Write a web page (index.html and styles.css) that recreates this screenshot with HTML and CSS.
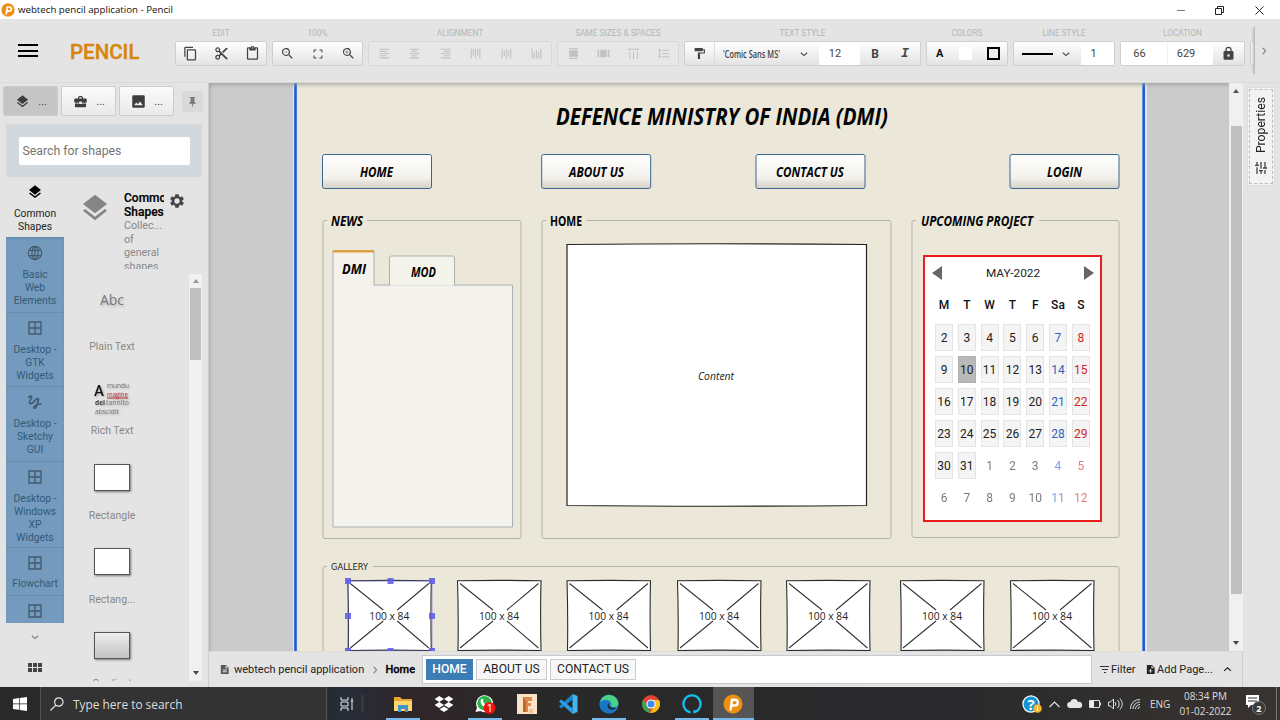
FILE: index.html
```html
<!DOCTYPE html>
<html lang="en">
<head>
<meta charset="utf-8">
<title>webtech pencil application - Pencil</title>
<link rel="stylesheet" href="styles.css">
</head>
<body>
<svg class="defs" aria-hidden="true">
  <defs>
    <symbol id="pencil" viewBox="0 0 16 16"><circle cx="8" cy="8" r="7.6" fill="#ef8f12"/><path d="M6 12.5 7.2 4.6h2.3a2.3 2.3 0 0 1 0 4.6H7.6" fill="none" stroke="#fff" stroke-width="1.9" stroke-linecap="round" stroke-linejoin="round"/></symbol>
    <symbol id="layers" viewBox="0 0 24 24"><path d="M12 18.5 4.6 12.8 3 14.1l9 7 9-7-1.6-1.3zM12 16l7.4-5.7L21 9l-9-7-9 7 1.6 1.3z"/></symbol>
    <symbol id="copy" viewBox="0 0 24 24"><path d="M16 1H4a2 2 0 0 0-2 2v14h2V3h12zm3 4H8a2 2 0 0 0-2 2v14c0 1.1.9 2 2 2h11a2 2 0 0 0 2-2V7a2 2 0 0 0-2-2zm0 16H8V7h11z"/></symbol>
    <symbol id="cut" viewBox="0 0 24 24"><path d="M9.6 7.6A4 4 0 1 0 7.6 9.600L10 12l-2.400 2.400a4 4 0 1 0 2 2L12 14l7 7h3v-1zM6 8a2 2 0 1 1 0-4 2 2 0 0 1 0 4zm0 12a2 2 0 1 1 0-4 2 2 0 0 1 0 4zM19 3l-6 6 2 2 7-7V3z"/></symbol>
    <symbol id="paste" viewBox="0 0 24 24"><path d="M19 2h-4.200a3 3 0 0 0-5.600 0H5a2 2 0 0 0-2 2v16c0 1.100.9 2 2 2h14a2 2 0 0 0 2-2V4a2 2 0 0 0-2-2zm-7 0a1 1 0 1 1 0 2 1 1 0 0 1 0-2zm7 18H5V4h2v3h10V4h2z"/></symbol>
    <symbol id="zoomout" viewBox="0 0 24 24"><path d="M9.500 3a6.500 6.500 0 1 0 4.200 11.500l.3.300v.7l5 5 1.500-1.500-5-5h-.7l-.3-.3A6.500 6.500 0 0 0 9.500 3zm0 2a4.500 4.500 0 1 1 0 9 4.500 4.500 0 0 1 0-9zM7 9h5v1H7z"/></symbol>
    <symbol id="zoomin" viewBox="0 0 24 24"><path d="M9.500 3a6.500 6.500 0 1 0 4.200 11.500l.3.300v.7l5 5 1.500-1.500-5-5h-.7l-.3-.3A6.500 6.500 0 0 0 9.500 3zm0 2a4.500 4.500 0 1 1 0 9 4.500 4.500 0 0 1 0-9zM7 9h2V7h1v2h2v1h-2v2H9v-2H7z"/></symbol>
    <symbol id="fit" viewBox="0 0 24 24"><path d="M3 5v4h2V5h4V3H5a2 2 0 0 0-2 2zm2 10H3v4c0 1.100.9 2 2 2h4v-2H5zm14 4h-4v2h4a2 2 0 0 0 2-2v-4h-2zm0-16h-4v2h4v4h2V5a2 2 0 0 0-2-2z"/></symbol>
    <symbol id="al" viewBox="0 0 24 24"><path d="M3 3h18v2H3zm0 4h12v2H3zm0 4h18v2H3zm0 4h12v2H3zm0 4h18v2H3z"/></symbol>
    <symbol id="ac" viewBox="0 0 24 24"><path d="M3 3h18v2H3zm4 4h10v2H7zm-4 4h18v2H3zm4 4h10v2H7zm-4 4h18v2H3z"/></symbol>
    <symbol id="ar" viewBox="0 0 24 24"><path d="M3 3h18v2H3zm6 4h12v2H9zm-6 4h18v2H3zm6 4h12v2H9zm-6 4h18v2H3z"/></symbol>
    <symbol id="at" viewBox="0 0 24 24"><path d="M3 3h2v18H3zm4 0h2v12H7zm4 0h2v18h-2zm4 0h2v12h-2zm4 0h2v18h-2z"/></symbol>
    <symbol id="am" viewBox="0 0 24 24"><path d="M3 3h2v18H3zm4 4h2v10H7zm4-4h2v18h-2zm4 4h2v10h-2zm4-4h2v18h-2z"/></symbol>
    <symbol id="ab" viewBox="0 0 24 24"><path d="M3 3h2v18H3zm4 6h2v12H7zm4-3h2v15h-2zm4 3h2v12h-2zm4-6h2v18h-2z"/></symbol>
    <symbol id="sw" viewBox="0 0 24 24"><path d="M4 2h16v2H4zm0 4h16v12H4zm0 14h16v2H4z"/></symbol>
    <symbol id="sh" viewBox="0 0 24 24"><path d="M1 5h3v14H1zm5 0h12v14H6zm14 0h3v14h-3z"/></symbol>
    <symbol id="sp" viewBox="0 0 24 24"><path d="M2 4l3-3v2h14V1l3 3-3 3V5H5v2zM4 9h2v13H4zm7 0h2v13h-2zm7 0h2v13h-2z"/></symbol>
    <symbol id="ls" viewBox="0 0 24 24"><path d="M6 7h2.500L5 3.500 1.500 7H4v10H1.500L5 20.500 8.500 17H6zm4-2v2h12V5zm0 14h12v-2H10zm0-6h12v-2H10z"/></symbol>
    <symbol id="roller" viewBox="0 0 24 24"><path d="M18 4V2H3v6h15V6h2v4H9v12h4V12h9V4z"/></symbol>
    <symbol id="down" viewBox="0 0 16 16"><path d="M3 6l5 4.500L13 6" fill="none" stroke="currentColor" stroke-width="1.700"/></symbol>
    <symbol id="lock" viewBox="0 0 24 24"><path d="M18 8h-1V6A5 5 0 0 0 7 6v2H6a2 2 0 0 0-2 2v10c0 1.100.9 2 2 2h12a2 2 0 0 0 2-2V10a2 2 0 0 0-2-2zm-6 9a2 2 0 1 1 0-4 2 2 0 0 1 0 4zM9 8V6a3 3 0 0 1 6 0v2z"/></symbol>
    <symbol id="case" viewBox="0 0 24 24"><path d="M10 16v-1H3v4c0 1.100.9 2 2 2h14a2 2 0 0 0 2-2v-4h-7v1zm10-9h-4V5l-2-2h-4L8 5v2H4a2 2 0 0 0-2 2v3c0 1.100.9 2 2 2h6v-2h4v2h6a2 2 0 0 0 2-2V9a2 2 0 0 0-2-2zm-6 0h-4V5h4z"/></symbol>
    <symbol id="image" viewBox="0 0 24 24"><path d="M22 20V4a2 2 0 0 0-2-2H4a2 2 0 0 0-2 2v16c0 1.100.9 2 2 2h16a2 2 0 0 0 2-2zM8.500 13.500l2.500 3 3.500-4.500 4.500 6H5z"/></symbol>
    <symbol id="pin" viewBox="0 0 24 24"><path d="M6 2h12v2h-2v8l3 3v2h-6v6h-2v-6H5v-2l3-3V4H6z"/></symbol>
    <symbol id="globe" viewBox="0 0 24 24"><g fill="none" stroke="currentColor" stroke-width="1.700"><circle cx="12" cy="12" r="10"/><ellipse cx="12" cy="12" rx="4.500" ry="10"/><path d="M3 8h18M3 16h18M12 2v20"/></g></symbol>
    <symbol id="grid" viewBox="0 0 24 24"><path d="M3 3h18v18H3zM12 3v18M3 12h18" fill="none" stroke="currentColor" stroke-width="2"/></symbol>
    <symbol id="gesture" viewBox="0 0 24 24"><path d="M2 6c2-3 5-4 5-1S2 11 4 13.500s6-1 8-4 6-3.500 5 0-2.500 12-5.500 12-1-6 10.500-6.500" fill="none" stroke="currentColor" stroke-width="2.500"/></symbol>
    <symbol id="gear" viewBox="0 0 24 24"><path fill-rule="evenodd" d="M9.500 2h5l.5 3 2 1.200 2.800-1.200 2.500 4.200L20 11v2l2.300 1.800-2.500 4.200-2.800-1.200-2 1.200-.5 3h-5L9 19l-2-1.200L4.200 19l-2.500-4.200L4 13v-2L1.700 9.200 4.200 5 7 6.200 9 5zM12 8a4 4 0 1 0 0 8 4 4 0 0 0 0-8z"/></symbol>
    <symbol id="tune" viewBox="0 0 24 24"><path d="M3 17v2h6v-2zM3 5v2h10V5zm10 16v-2h8v-2h-8v-2h-2v6zM7 9v2H3v2h4v2h2V9zm14 4v-2H11v2zM15 9h2V7h4V5h-4V3h-2z"/></symbol>
    <symbol id="doc" viewBox="0 0 24 24"><path fill-rule="evenodd" d="M6 2h9l6 6v14H4V2zm8 1.500V9h5.500zM8 12v2h9v-2zm0 4v2h9v-2z"/></symbol>
    <symbol id="docadd" viewBox="0 0 24 24"><path fill-rule="evenodd" d="M4 2h11l6 6v14H4zm10 1.500V9h5.500zM11 11v3H8v2h3v3h2v-3h3v-2h-3v-3z"/></symbol>
  </defs>
</svg>

<div class="window">
  <header class="titlebar">
    <svg class="app-icon"><use href="#pencil"/></svg>
    <span class="title">webtech pencil application - Pencil</span>
    <svg class="window-buttons" viewBox="0 0 90 18"><g fill="none" stroke="#222"><path d="M2 9.500h8" stroke="#777"/><path d="M40.500 7.500h6v6h-6zM42.500 7.500v-2h6v6h-2"/><path d="M80.500 5.500l8 8M88.500 5.500l-8 8"/></g></svg>
  </header>

  <div class="toolbar">
    <div class="burger"><i></i><i></i><i></i></div>
    <div class="brand">PENCIL</div>
    <div class="groups">
      <section class="group edit"><h6>EDIT</h6><div class="tools spread"><svg><use href="#copy"/></svg><svg><use href="#cut"/></svg><svg><use href="#paste"/></svg></div></section>
      <section class="group zoom"><h6>100%</h6><div class="tools spread"><svg><use href="#zoomout"/></svg><svg class="small"><use href="#fit"/></svg><svg><use href="#zoomin"/></svg></div></section>
      <section class="group align off"><h6>ALIGNMENT</h6><div class="tools spread"><svg><use href="#al"/></svg><svg><use href="#ac"/></svg><svg><use href="#ar"/></svg><svg><use href="#at"/></svg><svg><use href="#am"/></svg><svg><use href="#ab"/></svg></div></section>
      <section class="group sizes off"><h6>SAME SIZES &amp; SPACES</h6><div class="tools spread"><svg><use href="#sw"/></svg><svg><use href="#sh"/></svg><svg><use href="#sp"/></svg><svg><use href="#ls"/></svg></div></section>
      <section class="group text"><h6>TEXT STYLE</h6><div class="tools">
        <div class="cell roller"><svg><use href="#roller"/></svg></div>
        <div class="cell font"><svg class="font-name" viewBox="0 0 60 16"><text x="1" y="12" textLength="57" lengthAdjust="spacingAndGlyphs">'Comic Sans MS'</text></svg><svg class="chev"><use href="#down"/></svg></div>
        <div class="cell field size">12</div><div class="cell bold">B</div><div class="cell italic">I</div>
      </div></section>
      <section class="group colors"><h6>COLORS</h6><div class="tools"><b class="letter">A</b><i class="swatch fill"></i><i class="swatch line"></i></div></section>
      <section class="group stroke"><h6>LINE STYLE</h6><div class="tools"><div class="cell dash"><i></i><svg class="chev"><use href="#down"/></svg></div><div class="cell field">1</div></div></section>
      <section class="group location"><h6>LOCATION</h6><div class="tools"><div class="cell field">66</div><div class="cell field second">629</div><div class="cell lock"><svg><use href="#lock"/></svg></div></div></section>
      <section class="next-group"></section>
    </div>
    <div class="more"><svg class="chev turned"><use href="#down"/></svg></div>
  </div>

  <div class="main">
    <aside class="left">
      <nav class="tabs"><div class="tab on"><svg><use href="#layers"/></svg><span>...</span></div><div class="tab"><svg><use href="#case"/></svg><span>...</span></div><div class="tab"><svg><use href="#image"/></svg><span>...</span></div><div class="pin"><svg><use href="#pin"/></svg></div></nav>
      <div class="search"><div class="input">Search for shapes</div></div>
      <div class="shapes">
        <div class="collections">
          <div class="col current"><svg><use href="#layers"/></svg><span>Common<br>Shapes</span></div>
          <div class="col-list">
            <div class="col"><svg><use href="#globe"/></svg><span>Basic<br>Web<br>Elements</span></div>
            <div class="col"><svg><use href="#grid"/></svg><span>Desktop -<br>GTK<br>Widgets</span></div>
            <div class="col"><svg><use href="#gesture"/></svg><span>Desktop -<br>Sketchy<br>GUI</span></div>
            <div class="col"><svg><use href="#grid"/></svg><span>Desktop -<br>Windows<br>XP<br>Widgets</span></div>
            <div class="col"><svg><use href="#grid"/></svg><span>Flowchart</span></div>
            <div class="col"><svg><use href="#grid"/></svg></div>
          </div>
          <svg class="chev grey"><use href="#down"/></svg>
          <div class="dots"><i></i><i></i><i></i><i></i><i></i><i></i></div>
        </div>
        <div class="details">
          <div class="about"><svg class="big"><use href="#layers"/></svg><div class="desc"><b>Common<br>Shapes</b><br>Collec...<br>of<br>general<br>shapes</div><svg class="gear"><use href="#gear"/></svg></div>
          <div class="shape-pane">
            <div class="shape-list">
              <div class="shape"><div class="thumb abc">Abc</div><span>Plain Text</span></div>
              <div class="shape"><div class="thumb"><svg class="rich" viewBox="0 0 38 36"><text class="cap" x="1" y="15">A</text><text x="14" y="7" textLength="22" lengthAdjust="spacingAndGlyphs">mundu</text><text class="red" x="14" y="15.500" textLength="21" lengthAdjust="spacingAndGlyphs">magine</text><path d="M14 17h21" stroke="#b33"/><text class="strong" x="2" y="24" textLength="10" lengthAdjust="spacingAndGlyphs">del</text><text x="13" y="24" textLength="23" lengthAdjust="spacingAndGlyphs">tannito</text><text x="2" y="32.500" textLength="24" lengthAdjust="spacingAndGlyphs">abscidit</text></svg></div><span>Rich Text</span></div>
              <div class="shape"><div class="thumb"><i class="rect"></i></div><span>Rectangle</span></div>
              <div class="shape"><div class="thumb"><i class="rect"></i></div><span>Rectang...</span></div>
              <div class="shape"><div class="thumb"><i class="rect gradient"></i></div><span>Gradient</span></div>
            </div>
            <div class="scroll"><i class="up"></i><i class="bar"></i><i class="dn"></i></div>
          </div>
        </div>
      </div>
    </aside>

    <div class="center">
      <div class="stage">
        <div class="canvas">
          <svg class="drawing" viewBox="209 83 1020 568">
            <defs>
              <linearGradient id="btn" x2="0" y2="1"><stop offset="0" stop-color="#fff"/><stop offset=".7" stop-color="#f1f0ea"/><stop offset="1" stop-color="#d3cfc3"/></linearGradient>
              <g id="ph"><path d="M.5.8Q43 0 84 .8Q83.200 35 84 70.500Q42 69.700 1 70.500Q1.600 35 .5.800z" fill="#fff" stroke="#2b2b2b" stroke-width="1.100"/><path d="M3 3.500L36 30M81.500 3.500L50 30M3 68L36 41M81.500 68L50 41" fill="none" stroke="#333" stroke-width="1.050"/><text class="note" x="22" y="40" textLength="40" lengthAdjust="spacingAndGlyphs">100 x 84</text></g>
            </defs>
            <rect x="293" y="83" width="854" height="568" fill="#dfe6ef"/>
            <rect x="297" y="83" width="846" height="568" fill="#ebe8d9"/>
            <path d="M295.500 83v568M1143.700 83v568" stroke="#1c5bd0" stroke-width="2.600"/>
            <g class="hand">
              <text class="headline" x="556" y="125" textLength="332" lengthAdjust="spacingAndGlyphs">DEFENCE MINISTRY OF INDIA (DMI)</text>
            </g>
            <g fill="url(#btn)" stroke="#3b6690">
              <rect x="322.500" y="154.500" width="109" height="34" rx="2"/><rect x="541.700" y="154.500" width="109" height="34" rx="2"/><rect x="756" y="154.500" width="109" height="34" rx="2"/><rect x="1010" y="154.500" width="109" height="34" rx="2"/>
            </g>
            <g class="hand">
              <text x="360" y="177" textLength="33" lengthAdjust="spacingAndGlyphs">HOME</text>
              <text x="569" y="177" textLength="55" lengthAdjust="spacingAndGlyphs">ABOUT US</text>
              <text x="776" y="177" textLength="68" lengthAdjust="spacingAndGlyphs">CONTACT US</text>
              <text x="1047" y="177" textLength="35" lengthAdjust="spacingAndGlyphs">LOGIN</text>
              <text x="331" y="225.500" textLength="32" lengthAdjust="spacingAndGlyphs">NEWS</text>
              <text class="upright" x="550" y="225.500" textLength="32" lengthAdjust="spacingAndGlyphs">HOME</text>
              <text x="921" y="225.500" textLength="112" lengthAdjust="spacingAndGlyphs">UPCOMING PROJECT</text>
            </g>
            <g fill="none" stroke="#b5b3a5">
              <path d="M327 220.500h-2q-2 0-2 2v314q0 2 2 2h194q2 0 2-2V222.500q0-2-2-2H367"/>
              <path d="M546 220.500h-2q-2 0-2 2v314q0 2 2 2h345q2 0 2-2V222.500q0-2-2-2H586"/>
              <path d="M916 220.500h-2q-2 0-2 2v313q0 2 2 2h203q2 0 2-2V222.500q0-2-2-2H1039"/>
              <path d="M327 566.500h-2q-2 0-2 2V651M1119 651V568.500q0-2-2-2H373"/>
            </g>
            <path d="M333 250.500h41v34.500h138.500v242H333z" fill="#f3f2ec" stroke="#a9b0b1"/>
            <path d="M389.500 285.500V258q0-2 2-2h61q2 0 2 2v27.500" fill="#f3f3ea" stroke="#a9b0b1"/>
            <path d="M333 251.300h41" stroke="#e59c35" stroke-width="2.200"/>
            <g class="hand"><text x="342" y="273.500" textLength="24" lengthAdjust="spacingAndGlyphs">DMI</text><text x="411" y="276.500" textLength="25" lengthAdjust="spacingAndGlyphs">MOD</text></g>
            <path d="M567 244.500Q710 243 866.500 244.500V505.500Q710 507 567 505.500z" fill="#fff" stroke="#222" stroke-width="1.200"/>
            <text class="note slant" x="698" y="380" textLength="36" lengthAdjust="spacingAndGlyphs">Content</text>
            <text class="gallery" x="331" y="570" textLength="37" lengthAdjust="spacingAndGlyphs">GALLERY</text>
            <use href="#ph" x="347.300" y="580"/><use href="#ph" x="457" y="580"/><use href="#ph" x="566.500" y="580"/><use href="#ph" x="677" y="580"/><use href="#ph" x="786" y="580"/><use href="#ph" x="900" y="580"/><use href="#ph" x="1010" y="580"/>
            <path d="M348 581h84v70h-84z" fill="none" stroke="#6b66dc" stroke-opacity=".55"/>
            <path d="M345 578h6v6h-6zM387.500 578h6v6h-6zM429 578h6v6h-6zM345 613h6v6h-6zM429 613h6v6h-6zM345 648h6v6h-6zM387.500 648h6v6h-6zM429 648h6v6h-6z" fill="#6260e8" fill-opacity=".9"/>
          </svg>
          <div class="calendar">
            <div class="month"><i class="prev"></i><span>MAY-2022</span><i class="next"></i></div>
            <div class="days head"><b>M</b><b>T</b><b>W</b><b>T</b><b>F</b><b>Sa</b><b>S</b></div>
            <div class="days">
              <span>2</span><span>3</span><span>4</span><span>5</span><span>6</span><span>7</span><span>8</span>
              <span>9</span><span class="today">10</span><span>11</span><span>12</span><span>13</span><span>14</span><span>15</span>
              <span>16</span><span>17</span><span>18</span><span>19</span><span>20</span><span>21</span><span>22</span>
              <span>23</span><span>24</span><span>25</span><span>26</span><span>27</span><span>28</span><span>29</span>
              <span>30</span><span>31</span><span class="out">1</span><span class="out">2</span><span class="out">3</span><span class="out">4</span><span class="out">5</span>
              <span class="out">6</span><span class="out">7</span><span class="out">8</span><span class="out">9</span><span class="out">10</span><span class="out">11</span><span class="out">12</span>
            </div>
          </div>
        </div>
        <div class="scroll page-scroll"><i class="up"></i><i class="bar"></i><i class="dn"></i></div>
      </div>
      <div class="pages">
        <div class="crumbs"><svg><use href="#doc"/></svg><span class="file">webtech pencil application</span><svg class="chev turned grey"><use href="#down"/></svg><b>Home</b></div>
        <div class="page-tabs"><span class="on">HOME</span><span class="about-tab">ABOUT US</span><span class="contact-tab">CONTACT US</span></div>
        <div class="page-tools"><i class="filter"></i><span class="filter-label">Filter</span><svg><use href="#docadd"/></svg><span class="add">Add Page...</span><svg class="chev upward"><use href="#down"/></svg></div>
      </div>
    </div>

    <aside class="right"><div class="prop"><span>Properties</span><svg><use href="#tune"/></svg></div></aside>
  </div>

  <footer class="taskbar">
    <div class="start"><svg viewBox="0 0 14 14"><path d="M0 2l6-.9v5.500H0zM6.700 1 14 0v6.600H6.700zM0 7.300h6v5.500L0 12zM6.700 7.300H14V14l-7.300-1z" fill="#fff"/></svg></div>
    <div class="find"><svg viewBox="0 0 14 14"><g fill="none" stroke="#e8e8e8" stroke-width="1.200"><circle cx="8.800" cy="5" r="4.200"/><path d="M5.800 8.200.5 13.500"/></g></svg><span>Type here to search</span></div>
    <div class="view"><svg viewBox="0 0 14 14"><path d="M1 0v3h7V0M1 14v-3h7v3M1 5h7v4H1zM12 1v12M10.800 4h2.400" fill="none" stroke="#e5e5e5"/></svg><i></i></div>
    <div class="apps">
      <div class="app run"><svg viewBox="0 0 20 20"><path d="M1 3h6l2 2h10v12H1z" fill="#e8a62e"/><path d="M1 7h18v10H1z" fill="#ffd768"/><path d="M5 18v-7h10v7h-3v-3H8v3z" fill="#3f93cf"/></svg></div>
      <div class="app"><svg viewBox="0 0 20 20"><path d="M5.300 2 10 5 5.300 8 .6 5zM14.700 2l4.700 3-4.700 3L10 5zM5.300 8l4.700 3-4.700 3L.6 11zM14.700 8l4.700 3-4.700 3L10 11zM10 12.500l4.500 2.800L10 18l-4.500-2.700z" fill="#fff"/></svg></div>
      <div class="app run"><svg viewBox="0 0 20 20"><path d="M.5 18 2 13.500A8.500 8.500 0 1 1 5.300 17z" fill="#fff"/><circle cx="9.500" cy="9.200" r="7.200" fill="#29b34a"/><path d="M6 5.500c2-2 3 1 2 2 1 2 2 3 4 3 2-1 3 1 1 3-3 2-9-4-7-8z" fill="#fff"/><circle cx="14.500" cy="14" r="6" fill="#f50f13"/><text x="12" y="17.700" class="badge">1</text></svg></div>
      <div class="app"><svg viewBox="0 0 20 20"><path d="M0 0h20v20H0z" fill="#fae2c9"/><path d="M6 3h9v4h-4v2h3v3h-3v6H6z" fill="#dc8a47"/><path d="M6 3 9 8v10H6z" fill="#bb6930"/><path d="M12 15h4v4h-4z" fill="#f5bf89"/></svg></div>
      <div class="app"><svg viewBox="0 0 20 20"><path d="M14.500 0v5.500L3.200 14.500 1 12.500z" fill="#1688d0"/><path d="M14.500 20v-5.500L3.200 5.500 1 7.500z" fill="#2b9ee7"/><path d="M14.500 0 19.500 2v16l-5 2z" fill="#45b4f3"/></svg></div>
      <div class="app run"><svg viewBox="0 0 20 20"><circle cx="10" cy="10" r="9.500" fill="#1687cf"/><path d="M1 8A9.500 9.500 0 0 1 19.500 9c.3 4-5 5-7.500 3 2-5-4-9-11-4z" fill="#4ed183"/><path d="M.5 9c5-5 10-2 9 1-3 2-1 7 8 5.500A9.500 9.500 0 0 1 .5 9z" fill="#1976c5"/><path d="M10 8.500c-1 4 2 6 7 5l-1.500 2c-6 1-9-3-5.500-7z" fill="#262528"/></svg></div>
      <div class="app"><svg viewBox="0 0 20 20"><circle cx="10" cy="10" r="9" fill="#e54335"/><path d="M2.200 5.500 7 13l2 5.900A9 9 0 0 1 2.200 5.500z" fill="#33a852"/><path d="M10 6h8a9 9 0 0 1-9 12.900L13.500 12z" fill="#fbc116"/><circle cx="10" cy="10" r="4.600" fill="#fff"/><circle cx="10" cy="10" r="3.500" fill="#4285f4"/></svg></div>
      <div class="app run"><svg viewBox="0 0 20 20"><path d="M8.500 18.300a8.500 8.500 0 1 1 3 0q1.500-1 0-1.300" fill="none" stroke="#13bff0" stroke-width="2.300"/></svg></div>
      <div class="app run active"><svg><use href="#pencil"/></svg></div>
    </div>
    <div class="tray">
      <svg class="icons" viewBox="0 0 125 24"><circle cx="11" cy="12" r="8.700" fill="#fff"/><circle cx="11" cy="12" r="7.500" fill="#1394d5"/><text x="7.500" y="17.500" class="qm">?</text><circle cx="17.500" cy="16.500" r="4.300" fill="#f2b52f"/><path d="M17.500 14v5" stroke="#fff" stroke-width="1.200"/><path d="M29.500 15l5-5 5 5" fill="none" stroke="#ddd" stroke-width="1.200"/><path d="M50 16a3 3 0 0 1 .3-6A4 4 0 0 1 58 10a3 3 0 0 1 2 6z" fill="#e6e6e6"/><path d="M69.500 8.500h10v7h-10zM80.500 10.500v3" fill="none" stroke="#ddd"/><path d="M70 9h4v6h-4z" fill="#eee"/><g fill="none" stroke="#ddd"><path d="M88.500 10h2l3-3v10l-3-3h-2zM95 10q2 2 0 4M97.500 8q3.500 4 0 8M100 6.500q4.500 5.500 0 11"/><path d="M110.500 17A9 9 0 0 1 120 7.500M113 17a7 7 0 0 1 7-7M115.500 17a4.500 4.500 0 0 1 4.500-4.500M118 17q0-2 2-2"/></g></svg>
      <span class="lang">ENG</span>
      <div class="clock"><span>08:34 PM</span><span>01-02-2022</span></div>
      <svg class="notice" viewBox="0 0 24 24"><path d="M2 3h13v10H7l-3 3v-3H2z" fill="#fff"/><path d="M4 6h9M4 9h9" stroke="#333"/><circle cx="15" cy="16" r="6.500" fill="#3a3a3a" stroke="#777"/><text x="12.300" y="19.500" class="count">2</text></svg>
      <i class="peek"></i>
    </div>
  </footer>
</div>
</body>
</html>
```

FILE: styles.css
```css
* { box-sizing: border-box; }
body { margin: 0; overflow: hidden; font-family: Roboto, sans-serif; color: #222; }
svg { fill: currentColor; flex: none; }
i { font-style: normal; flex: none; }
.defs { position: absolute; width: 0; height: 0; }
.window { width: 1280px; height: 720px; display: flex; flex-direction: column; background: #e4e4e4; }

.titlebar { height: 19px; flex: none; background: #fff; display: flex; align-items: center; padding-left: 1px; font: 9.700px "Open Sans", sans-serif; color: #111; }
.app-icon { width: 14px; height: 14px; margin-right: 3px; }
.title { flex: 1; line-height: 18px; }
.window-buttons { width: 90px; height: 18px; margin-right: 15.500px; }

.toolbar { height: 64px; flex: none; display: flex; border-bottom: 1px solid #d9d9d9; color: #444; }
.burger { width: 20px; margin: 25px 0 0 18px; display: flex; flex-direction: column; gap: 3.500px; }
.burger i { height: 2px; background: #000; }
.brand { width: 72px; margin: 20px 33px 0 32px; font-size: 20.500px; line-height: 27px; font-weight: 500; color: #d8860b; -webkit-text-stroke: .35px #d8860b; }
.groups { display: flex; gap: 5px; width: 1079px; overflow: hidden; }
.group { flex: none; padding-top: 8px; }
.group h6 { margin: 0 0 2px; height: 12px; line-height: 13px; font-size: 8.300px; font-weight: 400; text-align: center; color: #b5b5b5; white-space: nowrap; }
.tools { height: 25px; display: flex; align-items: center; justify-content: space-around; border: 1px solid #cfcfcf; border-radius: 2px; background: linear-gradient(#fff, #e3e3e3); }
.tools.spread { justify-content: space-between; padding: 0 6.500px 0 7px; }
.tools svg { width: 15px; height: 15px; }
.tools .small { width: 12px; height: 12px; }
.edit { width: 92px; } .zoom { width: 91px; } .align { width: 184px; } .sizes { width: 122px; } .text { width: 237px; } .colors { width: 82px; } .stroke { width: 102px; } .location { width: 125px; }
.off .tools { background: #e7e7e7; border-color: #d6d6d6; color: #c2c2c2; padding: 0 8px 0 9px; }
.off .tools svg { width: 13px; height: 13px; }
.cell { height: 100%; display: flex; align-items: center; justify-content: center; flex: 1; }
.field { background: #fff; font-size: 11px; }
.text .tools .cell { flex: none; }
.text .roller { width: 30px; border-right: 1px solid #ddd; }
.tools .roller svg { width: 13px; height: 13px; }
.text .font { width: 104px; justify-content: space-between; padding: 0 10px 0 7px; }
.tools .font-name { width: 60px; height: 16px; overflow: visible; font: 600 10px "Open Sans", sans-serif; }
.tools .chev { width: 10px; height: 10px; }
.text .size { width: 41px; padding-right: 9px; }
.bold, .italic { width: 30px; font: bold 12px Roboto, sans-serif; }
.italic { font: italic bold 13px "Liberation Mono", monospace; }
.letter { font-size: 11px; color: #111; }
.colors .tools { justify-content: space-between; padding: 0 7px 0 9px; }
.swatch { width: 13px; height: 13px; background: #fff; }
.swatch.line { border: 2px solid #000; background: #eee; }
.stroke .dash { flex: none; width: 67px; gap: 8px; padding-right: 2px; }
.dash i { width: 31px; height: 2px; background: #000; }
.stroke .field { padding-right: 8px; }
.location .field { flex: none; width: 46px; padding-right: 9px; }
.location .second { border-left: 1px solid #f1f1f1; }
.next-group { flex: none; width: 20px; height: 25px; margin-top: 22px; background: #f6f6f6; border: 1px solid #ccc; border-radius: 2px; }
.more { width: 26px; height: 47px; margin-top: 8px; border-left: 1px solid #bbb; display: flex; align-items: center; padding-left: 4px; box-shadow: -2px 0 2px -1px #bbb; color: #777; }
.chev { width: 10px; height: 10px; }
.turned { transform: rotate(-90deg); }
.upward { transform: rotate(180deg); }
.grey { color: #777; }

.main { height: 604px; flex: none; display: flex; }
.left { width: 209px; flex: none; display: flex; flex-direction: column; border-right: 1px solid #ccc; }
.tabs { display: flex; gap: 3px; padding: 3px 0 0 3px; height: 41px; flex: none; color: #3e3e3e; }
.tab { width: 55px; height: 30px; display: flex; align-items: center; justify-content: space-between; padding: 0 10px 0 11px; background: linear-gradient(#fbfbfb, #e9e9e9); border: 1px solid #ccc; border-radius: 2px; font-size: 11px; }
.tab.on { background: #c5c5c5; }
.tab svg { width: 15px; height: 15px; }
.pin { width: 21px; height: 21px; margin: 5px 0 0 5px; display: flex; align-items: center; justify-content: center; background: #d9d9d9; color: #777; border-radius: 2px; }
.pin svg { width: 11px; height: 11px; }
.search { width: 196px; height: 53px; flex: none; margin-left: 6px; padding: 13px 12.500px; background: #d2d8db; }
.input { width: 171px; height: 28px; background: #fff; border-radius: 2px; padding-left: 4px; font-size: 12.300px; line-height: 28px; color: #757575; }
.shapes { display: flex; flex: 1; min-height: 0; padding-left: 6px; }
.collections { width: 58px; display: flex; flex-direction: column; align-items: center; }
.col { width: 58px; height: 74.500px; flex: none; display: flex; flex-direction: column; align-items: center; gap: 7px; padding-top: 7px; text-align: center; font-size: 10.300px; line-height: 13px; color: #335a78; border-bottom: 1px solid #668eae; }
.col svg { width: 16px; height: 16px; color: #41596d; }
.col-list .col:first-child { height: 75.500px; padding-top: 8px; }
.col-list .col:nth-child(4) { height: 86px; }
.col-list .col:nth-child(5) { height: 48.500px; gap: 6px; }
.col.current { height: 60px; padding-top: 6.500px; border: 0; color: #222; }
.current svg { color: #000; }
.col-list { height: 386px; overflow: hidden; background: #749bbd; box-shadow: inset 0 2px 2px #668eae; flex: none; }
.collections > .chev { margin: 9px 0 21px; }
.dots { display: grid; grid-template-columns: repeat(3, 4px); grid-auto-rows: 4px; gap: 1px; }
.dots i { background: #444; }
.details { width: 138px; display: flex; flex-direction: column; min-height: 0; }
.about { height: 97px; flex: none; display: flex; padding-left: 15px; }
.big { width: 32px; height: 32px; margin: 15px 13px 0 0; color: #858585; }
.desc { width: 40px; height: 78px; margin-top: 13.500px; overflow: hidden; font-size: 10.700px; line-height: 13.400px; color: #888; white-space: nowrap; }
.desc b { font-size: 12px; line-height: 14.300px; color: #000; font-weight: 500; -webkit-text-stroke: .2px #000; }
.gear { width: 16px; height: 16px; margin: 16px 0 0 5px; color: #444; }
.shape-pane { display: flex; height: 407px; }
.shape-list { width: 125px; height: 407px; overflow: hidden; padding: 1px 29px 0 0; }
.shape { height: 84.300px; display: flex; flex-direction: column; align-items: center; font-size: 10.500px; line-height: 14px; color: #888; }
.thumb { height: 65px; display: flex; align-items: center; flex: none; transform: translateY(1px); }
.shape:nth-child(2) .thumb { transform: translateY(7px); }
.thumb.abc { transform: translateY(-8px); font: 500 14px "Open Sans", sans-serif; color: #777; text-shadow: 1px 2px 2px #bbb; }
.rich { width: 38px; height: 36px; font: 7.500px "Open Sans", sans-serif; color: #777; filter: drop-shadow(1px 1px 1px #aaa); }
.rich .cap { font: 500 15px Roboto, sans-serif; fill: #111; }
.rich .red { fill: #b33; }
.rich .strong { font-weight: 700; fill: #444; }
.rect { width: 36px; height: 27px; border: 1px solid #555; background: #fff; box-shadow: 1px 1px 2px #777; }
.gradient { background: linear-gradient(#eee, #c2c2c2); }
.scroll { width: 13px; height: 100%; background: #f0f0f0; display: flex; flex-direction: column; align-items: center; flex: none; }
.up, .dn { border: 3px solid transparent; width: 6px; height: 6px; }
.up { border-bottom: 4px solid #999; margin: 2px 0 5px; }
.dn { border-top: 4px solid #444; margin: auto 0 3px; }
.scroll .bar { width: 11px; height: 72px; background: #c0c0c0; }

.center { width: 1034px; flex: none; display: flex; flex-direction: column; }
.stage { height: 568px; display: flex; flex: none; }
.canvas { position: relative; width: 1020px; background: #cbcbcb; }
.drawing { display: block; width: 1020px; height: 568px; }
.canvas::after { content: ""; position: absolute; inset: 0; box-shadow: inset 2px 3px 5px -2px #999; }
.page-scroll { width: 14px; }
.page-scroll .up { border-bottom-color: #555; margin: 3px 0 33px; }
.page-scroll .bar { height: 468px; }
.hand { font: italic bold 14.500px "Open Sans", sans-serif; fill: #050505; }
.hand .headline { font-size: 23px; }
.hand .upright { font-style: normal; }
.note { font: 10.500px "Open Sans", sans-serif; fill: #222; }
.slant { font-style: italic; }
.gallery { font: 9px "DejaVu Sans", sans-serif; fill: #222; }
.calendar { position: absolute; left: 714px; top: 172px; width: 179px; height: 267px; border: 2px solid #ed1c1c; background: #fff; }
.month { height: 32px; display: flex; align-items: center; justify-content: space-between; padding: 0 6px 0 7px; font-size: 11.800px; }
.prev, .next { border: 7.500px solid transparent; }
.prev { border-right: 10px solid #666; border-left: 0; }
.next { border-left: 10px solid #666; border-right: 0; }
.days { display: grid; grid-template-columns: repeat(7, 18px); grid-auto-rows: 27px; column-gap: 4.800px; row-gap: 5.200px; padding-left: 10px; font-size: 12px; text-align: center; line-height: 27px; }
.days.head { height: 34.500px; line-height: 32px; }
.days.head b { font-weight: 500; color: #111; }
.days span { background: #f4f4f4; border: 1px solid #e4e4e4; line-height: 26px; white-space: nowrap; display: flex; justify-content: center; }
.days .today { background: #b9b9b9; border-color: #b0b0b0; }
.days span:nth-child(7n - 1) { color: #2e62bd; }
.days span:nth-child(7n) { color: #cb2626; }
.days .out { background: none; border-color: transparent; opacity: .6; }

.pages { height: 36px; display: flex; align-items: center; border-right: 1px solid #ccc; border-top: 1px solid #dcdcdc; font-size: 11px; }
.crumbs { width: 213px; flex: none; display: flex; align-items: center; padding-left: 10px; }
.crumbs svg:first-child { width: 11px; height: 11px; margin-right: 4px; color: #555; }
.crumbs .file { width: 131px; white-space: nowrap; }
.crumbs .chev { margin: 0 6px 0 4.500px; }
.crumbs b { font-weight: 500; color: #000; -webkit-text-stroke: .3px #000; }
.page-tabs { width: 670px; flex: none; height: 29px; display: flex; align-items: flex-start; gap: 3px; padding: 3px; background: #fff; border: 1px solid #c9c9c9; font-size: 12.100px; }
.page-tabs span { height: 21px; text-align: center; line-height: 18px; border: 1px solid #ccc; background: #f7f7f7; white-space: nowrap; }
.page-tabs .on { width: 47px; background: #3d7db5; border-color: #3d7db5; color: #fff; font-weight: 500; }
.page-tabs .about-tab { width: 71px; }
.page-tabs .contact-tab { width: 86px; }
.page-tools { display: flex; align-items: center; padding-left: 8px; white-space: nowrap; }
.filter { width: 9px; height: 7px; background: linear-gradient(#333, #333) center top / 9px 1px no-repeat, linear-gradient(#333, #333) center / 6px 1px no-repeat, linear-gradient(#333, #333) center bottom / 2px 1px no-repeat; }
.filter-label { width: 34px; margin-left: 2px; }
.page-tools svg { width: 11px; height: 11px; }
.page-tools .add { width: 65px; margin-left: 1px; }
.right { flex: 1; padding: 4px 0 0 4px; }
.prop { width: 28px; height: 99px; border: 1px solid #ddd; outline: 1px dashed #bbb; outline-offset: -3px; background: #f3f3f3; display: flex; flex-direction: column; align-items: center; justify-content: center; gap: 7px; }
.prop span { writing-mode: vertical-rl; transform: rotate(180deg); font-size: 12.200px; line-height: 15px; }
.prop svg { width: 16px; height: 16px; transform: rotate(-90deg); color: #444; }

.taskbar { height: 33px; display: flex; background: linear-gradient(90deg, #292929 0 25%, #252d39 27%, #302628 32%, #292829 42%, #292a2c 75%, #393331); color: #ddd; font-family: "Open Sans", sans-serif; }
.start { width: 40px; display: flex; align-items: center; justify-content: center; }
.start svg { width: 14px; height: 14px; }
.find { width: 287px; background: #333; border-left: 1px solid #555; border-right: 1px solid #555; display: flex; align-items: center; padding-left: 9px; gap: 9px; font-size: 11.900px; }
.find svg { width: 14px; height: 14px; }
.view { width: 55px; display: flex; align-items: center; padding-left: 13px; }
.view svg { width: 14px; height: 14px; }
.view i { width: 3px; height: 17px; background: #38393d; margin-left: 7px; }
.apps { display: flex; width: 372px; }
.app { flex: 1; display: flex; align-items: center; justify-content: center; }
.app svg { width: 20px; height: 20px; overflow: visible; }
.app.run { background: linear-gradient(#76b9ed, #76b9ed) center bottom / 34px 2px no-repeat; }
.app.active { background: linear-gradient(#76b9ed, #76b9ed) bottom / 100% 2px no-repeat, #575554; }
.badge { font: 10px Roboto, sans-serif; fill: #fff; }
.tray { margin-left: auto; display: flex; align-items: center; }
.icons { width: 125px; height: 24px; }
.qm { font: bold 15px "Open Sans", sans-serif; fill: #fff; }
.lang { width: 35px; padding-left: 5px; font-size: 10px; }
.clock { width: 51px; display: flex; flex-direction: column; align-items: center; font-size: 10px; line-height: 15px; white-space: nowrap; }
.notice { width: 24px; height: 24px; margin-left: 13px; }
.count { font: bold 9px "Open Sans", sans-serif; fill: #fff; }
.peek { width: 4px; height: 33px; margin-left: 8px; border-left: 1px solid #777; }
```
